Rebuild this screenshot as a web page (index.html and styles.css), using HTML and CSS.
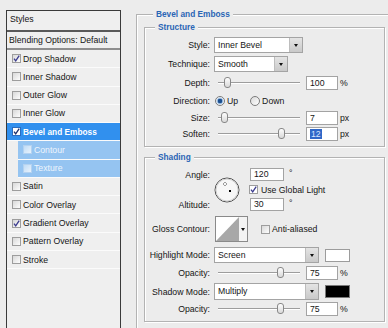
FILE: index.html
```html
<!DOCTYPE html>
<html>
<head>
<meta charset="utf-8">
<link rel="stylesheet" href="styles.css">
</head>
<body>
<div class="page">
  <aside class="styles-panel">
    <div class="panel-head">Styles</div>
    <div class="panel-blend">Blending Options: Default</div>
    <ul class="fx-list">
      <li class="fx"><span class="cb"><svg viewBox="0 0 9 9"><path d="M2 4.6 L3.7 6.8 L7.2 1.6"/></svg></span>Drop Shadow</li>
      <li class="fx"><span class="cb"></span>Inner Shadow</li>
      <li class="fx"><span class="cb"></span>Outer Glow</li>
      <li class="fx"><span class="cb"></span>Inner Glow</li>
      <li class="fx sel"><span class="cb"><svg viewBox="0 0 9 9"><path d="M2 4.6 L3.7 6.8 L7.2 1.6"/></svg></span>Bevel and Emboss</li>
      <li class="fx sub"><span class="cb"></span>Contour</li>
      <li class="fx sub"><span class="cb"></span>Texture</li>
      <li class="fx"><span class="cb"></span>Satin</li>
      <li class="fx"><span class="cb"></span>Color Overlay</li>
      <li class="fx"><span class="cb"><svg viewBox="0 0 9 9"><path d="M2 4.6 L3.7 6.8 L7.2 1.6"/></svg></span>Gradient Overlay</li>
      <li class="fx"><span class="cb"></span>Pattern Overlay</li>
      <li class="fx"><span class="cb"></span>Stroke</li>
    </ul>
  </aside>

  <section class="settings">
    <div class="group outer">
      <div class="group-title">Bevel and Emboss</div>

      <div class="group structure">
        <div class="group-title">Structure</div>
        <div class="form">
          <div class="lbl">Style:</div>
          <div class="ctl"><div class="select w-style"><span class="sel-text">Inner Bevel</span><span class="sel-btn"></span></div></div>

          <div class="lbl">Technique:</div>
          <div class="ctl"><div class="select w-tech"><span class="sel-text">Smooth</span><span class="sel-btn"></span></div></div>

          <div class="lbl">Depth:</div>
          <div class="ctl"><div class="slider"><span class="thumb" style="left:9px"></span></div><div class="num">100</div><span class="unit">%</span></div>

          <div class="lbl">Direction:</div>
          <div class="ctl"><span class="radio on"></span><span class="rtext">Up</span><span class="radio down"></span><span class="rtext">Down</span></div>

          <div class="lbl">Size:</div>
          <div class="ctl"><div class="slider"><span class="thumb" style="left:6px"></span></div><div class="num">7</div><span class="unit">px</span></div>

          <div class="lbl">Soften:</div>
          <div class="ctl"><div class="slider"><span class="thumb" style="left:63px"></span></div><div class="num"><span class="hl">12</span></div><span class="unit">px</span></div>
        </div>
      </div>

      <div class="group shading">
        <div class="group-title">Shading</div>
        <div class="form">
          <div class="lbl r1">Angle:</div>
          <div class="dial">
            <svg viewBox="0 0 26 26" width="26" height="26">
              <circle cx="13" cy="13" r="12" fill="#f7f7f7" stroke="#505050" stroke-width="1"/>
              <circle cx="13" cy="13" r="11" fill="none" stroke="#d0d0d0" stroke-width="1"/>
              <rect x="15" y="13" width="2" height="2" fill="#000"/>
              <rect x="10.5" y="5" width="1" height="1" fill="#444"/>
              <rect x="9" y="6.5" width="1" height="1" fill="#444"/>
              <rect x="12" y="6.5" width="1" height="1" fill="#444"/>
              <rect x="10.5" y="8" width="1" height="1" fill="#444"/>
            </svg>
          </div>
          <div class="ctl c3 r1"><div class="num small">120</div><span class="deg">°</span></div>
          <div class="ctl c3 r2"><span class="cb gl"><svg viewBox="0 0 9 9"><path d="M2 4.6 L3.7 6.8 L7.2 1.6"/></svg></span><span>Use Global Light</span></div>
          <div class="lbl r3">Altitude:</div>
          <div class="ctl c3 r3"><div class="num small">30</div><span class="deg">°</span></div>

          <div class="lbl r4">Gloss Contour:</div>
          <div class="ctl span r4">
            <div class="contour">
              <svg class="curve" viewBox="0 0 23 24" width="23" height="24">
                <rect width="23" height="24" fill="#fff"/>
                <polygon points="0,24 23,0 23,24" fill="#a8a8a8"/>
              </svg>
              <span class="contour-btn"></span>
            </div>
            <span class="cb aa"></span><span>Anti-aliased</span>
          </div>

          <div class="lbl r5">Highlight Mode:</div>
          <div class="ctl span r5"><div class="select w-mode"><span class="sel-text">Screen</span><span class="sel-btn"></span></div><span class="swatch white"></span></div>

          <div class="lbl r6">Opacity:</div>
          <div class="ctl span r6"><div class="slider"><span class="thumb" style="left:62px"></span></div><div class="num">75</div><span class="unit">%</span></div>

          <div class="lbl r7">Shadow Mode:</div>
          <div class="ctl span r7"><div class="select w-mode tall"><span class="sel-text">Multiply</span><span class="sel-btn"></span></div><span class="swatch black"></span></div>

          <div class="lbl r8">Opacity:</div>
          <div class="ctl span r8"><div class="slider"><span class="thumb" style="left:62px"></span></div><div class="num">75</div><span class="unit">%</span></div>
        </div>
      </div>
    </div>
  </section>
</div>
</body>
</html>
```

FILE: styles.css
```css
* { box-sizing: border-box; }
html, body { margin: 0; padding: 0; }
body {
  background: #ececec;
  font-family: "Liberation Sans", Arial, sans-serif;
  font-size: 8.7px;
  color: #151515;
  overflow: hidden;
  width: 388px;
  height: 328px;
}
.page { display: flex; align-items: flex-start; height: 328px; }

/* ---------- left styles list ---------- */
.styles-panel {
  flex: none;
  margin: 10px 0 0 6px;
  width: 115px;
  height: 330px;
  border: 1px solid #3a3a3a;
  background: #efefef;
}
.panel-head {
  height: 21px;
  line-height: 17px;
  padding-left: 3px;
  border-bottom: 2px solid #595959;
}
.panel-blend {
  height: 18px;
  line-height: 16px;
  padding-left: 2px;
  border-bottom: 2px solid #8e8e8e;
}
.fx-list { list-style: none; margin: 0; padding: 0; }
.fx {
  height: 18.27px;
  display: flex;
  align-items: center;
  padding-left: 5px;
  border-bottom: 1px solid #fbfbfb;
  white-space: nowrap;
}
.fx.sel { background: #3190ee; color: #fff; font-weight: bold; font-size: 8.3px; }
.fx.sub { margin-left: 11px; background: #95c4f1; color: #eef5fd; }

.cb {
  flex: none;
  width: 9px;
  height: 9px;
  margin-right: 2px;
  border: 1px solid #9d9d9d;
  background: linear-gradient(135deg, #d8d8d8, #fdfdfd);
  display: inline-flex;
}
.cb svg { width: 9px; height: 9px; margin: -1px; }
.cb svg path { fill: none; stroke: #3b3b8e; stroke-width: 1.3; }
.fx.sel .cb { background: #fff; border-color: #2a6cbf; }
.fx.sel .cb svg path { stroke: #1c2f6a; }
.fx.sub .cb { background: linear-gradient(135deg, #c0dcf6, #e8f2fc); border-color: #b4d2f0; }

/* ---------- right settings ---------- */
.settings { flex: none; margin: 14px 0 0 15px; width: 262px; }
.group {
  border: 1px solid #b3b3b3;
  box-shadow: inset 1px 1px 0 #fff, 1px 1px 0 #fff;
}
.outer {
  border-right: none;
  border-bottom: none;
  height: 320px;
  padding-left: 7px;
}
.group-title {
  width: fit-content;
  margin: -7px 0 0 9px;
  padding: 0 3px;
  line-height: 13px;
  background: #ececec;
  color: #2a65b5;
  font-weight: bold;
  font-size: 8.3px;
}
.structure, .shading { width: 241px; }
.structure { margin-top: 6px; height: 120px; }
.structure .group-title, .shading .group-title { margin-left: 10px; }
.shading { margin-top: 10px; height: 165px; }

.form {
  display: grid;
  grid-template-columns: 65px 1fr;
  column-gap: 4px;
  align-items: center;
  margin-top: 2px;
}
.structure .form { grid-template-rows: 18px 20px 18px 18px 16px 16px; }
.shading .form {
  margin-top: 3px;
  grid-template-columns: 65px 32px 1fr;
  grid-template-rows: 15px 15px 15px 34px 18px 18px 19px 16px;
}
.lbl { text-align: right; white-space: nowrap; grid-column: 1; }
.ctl { display: flex; align-items: center; white-space: nowrap; }
.ctl.span { grid-column: 2 / -1; }
.c3 { grid-column: 3; }
.r1 { grid-row: 1; }
.r2 { grid-row: 2; }
.r3 { grid-row: 3; }
.r4 { grid-row: 4; }
.r5 { grid-row: 5; }
.r6 { grid-row: 6; }
.r7 { grid-row: 7; }
.r8 { grid-row: 8; }
.dial { grid-column: 2; grid-row: 1 / 4; align-self: start; margin-top: 10px; height: 26px; }
.dial svg { display: block; }

/* select */
.select {
  display: flex;
  height: 16px;
  border: 1px solid #a4a4a4;
  background: #fff;
}
.select.tall { height: 17px; }
.w-style { width: 89px; }
.w-tech { width: 74px; }
.w-mode { width: 105px; }
.sel-text { flex: 1; padding-left: 3px; line-height: 14px; }
.sel-btn {
  flex: none;
  width: 13px;
  border-left: 1px solid #bdbdbd;
  background: linear-gradient(#e4e4e4, #c9c9c9);
  display: flex;
  align-items: center;
  justify-content: center;
}
.sel-btn::after {
  content: "";
  border-left: 2.5px solid transparent;
  border-right: 2.5px solid transparent;
  border-top: 3px solid #111;
}

/* slider + number */
.slider {
  position: relative;
  flex: none;
  width: 82px;
  height: 2px;
  margin-left: 4px;
  border-top: 1px solid #9d9d9d;
  border-bottom: 1px solid #fff;
}
.thumb {
  position: absolute;
  top: -6px;
  width: 7px;
  height: 11px;
  margin-left: -3.5px;
  border: 1px solid #888;
  border-radius: 3px;
  background: linear-gradient(#fdfdfd, #d9d9d9);
}
.num {
  flex: none;
  width: 32px;
  height: 14px;
  margin-left: 6px;
  border: 1px solid #a3a3a3;
  background: #fff;
  padding-left: 3px;
  line-height: 12px;
}
.num.small { width: 34px; height: 13px; margin-left: 0; line-height: 11px; }
.hl { background: #3068c8; color: #d8e6ff; padding: 0 1px; }
.unit { margin-left: 2px; }
.deg { margin-left: 5px; margin-top: -4px; }

/* radios */
.radio {
  flex: none;
  width: 10px;
  height: 10px;
  border-radius: 50%;
  border: 1px solid #7b7b7b;
  background: linear-gradient(135deg, #d9d9d9, #fff);
  margin-left: 1px;
}
.radio.on { background: radial-gradient(circle, #1c4f8f 0 2px, #8fb4dc 2.5px, #fff 4px); }
.radio.down { margin-left: 12px; }
.rtext { margin-left: 2px; }

.cb.gl { margin-left: -1px; margin-right: 3px; background: #fff; }
.cb.aa { margin-left: 13px; margin-right: 2px; }

/* gloss contour */
.contour {
  flex: none;
  display: flex;
  margin-left: 1px;
  width: 33px;
  height: 26px;
  border: 1px solid #8a8a8a;
  background: #fff;
}
.contour .curve { display: block; flex: none; }
.contour-btn {
  flex: 1;
  display: flex;
  align-items: center;
  justify-content: center;
  background: #f3f3f3;
}
.contour-btn::after {
  content: "";
  border-left: 2px solid transparent;
  border-right: 2px solid transparent;
  border-top: 3px solid #111;
}

.swatch {
  flex: none;
  width: 25px;
  height: 13px;
  margin-left: 6px;
  border: 1px solid #9c9c9c;
}
.swatch.white { background: #fff; }
.swatch.black { background: #000; border-color: #7a7a7a; }
```
